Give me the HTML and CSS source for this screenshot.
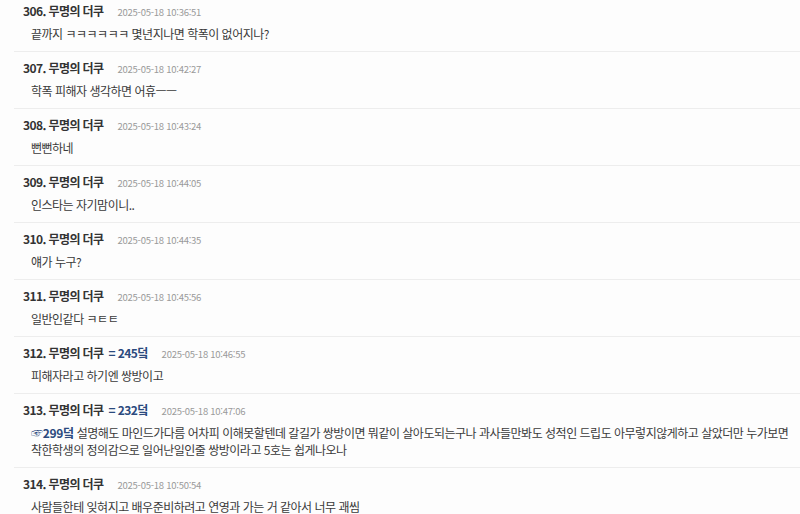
FILE: index.html
```html
<!DOCTYPE html>
<html lang="ko">
<head>
<meta charset="utf-8">
<link rel="stylesheet" href="styles.css">
</head>
<body>
<div class="list">
  <div class="reply">
    <div class="head"><span class="name">306. 무명의 더쿠</span><span class="date">2025-05-18 10:36:51</span></div>
    <div class="body">끝까지 ㅋㅋㅋㅋㅋㅋ 몇년지나면 학폭이 없어지나?</div>
  </div>
  <div class="reply">
    <div class="head"><span class="name">307. 무명의 더쿠</span><span class="date">2025-05-18 10:42:27</span></div>
    <div class="body">학폭 피해자 생각하면 어휴ㅡㅡ</div>
  </div>
  <div class="reply">
    <div class="head"><span class="name">308. 무명의 더쿠</span><span class="date">2025-05-18 10:43:24</span></div>
    <div class="body">뻔뻔하네</div>
  </div>
  <div class="reply">
    <div class="head"><span class="name">309. 무명의 더쿠</span><span class="date">2025-05-18 10:44:05</span></div>
    <div class="body">인스타는 자기맘이니..</div>
  </div>
  <div class="reply">
    <div class="head"><span class="name">310. 무명의 더쿠</span><span class="date">2025-05-18 10:44:35</span></div>
    <div class="body">얘가 누구?</div>
  </div>
  <div class="reply">
    <div class="head"><span class="name">311. 무명의 더쿠</span><span class="date">2025-05-18 10:45:56</span></div>
    <div class="body">일반인같다 ㅋㅌㅌ</div>
  </div>
  <div class="reply">
    <div class="head"><span class="name">312. 무명의 더쿠</span><span class="ref">= 245덬</span><span class="date">2025-05-18 10:46:55</span></div>
    <div class="body">피해자라고 하기엔 쌍방이고</div>
  </div>
  <div class="reply">
    <div class="head"><span class="name">313. 무명의 더쿠</span><span class="ref">= 232덬</span><span class="date">2025-05-18 10:47:06</span></div>
    <div class="body"><span class="link">☞299덬</span> 설명해도 마인드가다름 어차피 이해못할텐데 갈길가 쌍방이면 뭐같이 살아도되는구나 과사들만봐도 성적인 드립도 아무렇지않게하고 살았더만 누가보면 착한학생의 정의감으로 일어난일인줄 쌍방이라고 5호는 쉽게나오나</div>
  </div>
  <div class="reply">
    <div class="head"><span class="name">314. 무명의 더쿠</span><span class="date">2025-05-18 10:50:54</span></div>
    <div class="body">사람들한테 잊혀지고 배우준비하려고 연영과 가는 거 같아서 너무 괘씸</div>
  </div>
</div>
</body>
</html>
```

FILE: styles.css
```css
html, body {
  margin: 0;
  padding: 0;
  background: #fdfdfd;
}
body {
  font-family: "Noto Sans CJK KR", "Noto Sans", sans-serif;
  color: #3a3a3a;
  overflow: hidden;
}
.list {
  margin: -5px 0 0 14px;
}
.reply {
  padding: 7px 0 9px 0;
  border-bottom: 1px solid #ededed;
}
.head {
  display: flex;
  align-items: baseline;
  padding-left: 9px;
  height: 18px;
  line-height: 18px;
  margin-bottom: 5px;
  white-space: nowrap;
}
.name {
  font-size: 12px;
  font-weight: bold;
  color: #333;
  letter-spacing: -0.6px;
}
.ref {
  font-size: 12px;
  font-weight: bold;
  color: #2b4a7e;
  margin-left: 5px;
  letter-spacing: -0.6px;
}
.date {
  font-size: 9.5px;
  color: #9a9a9a;
  margin-left: 14px;
  letter-spacing: -0.25px;
}
.body {
  padding-left: 17px;
  font-size: 12px;
  line-height: 17px;
  letter-spacing: -0.5px;
  word-break: keep-all;
}
.link {
  color: #2b4a7e;
  font-weight: bold;
  letter-spacing: -0.3px;
}
```
